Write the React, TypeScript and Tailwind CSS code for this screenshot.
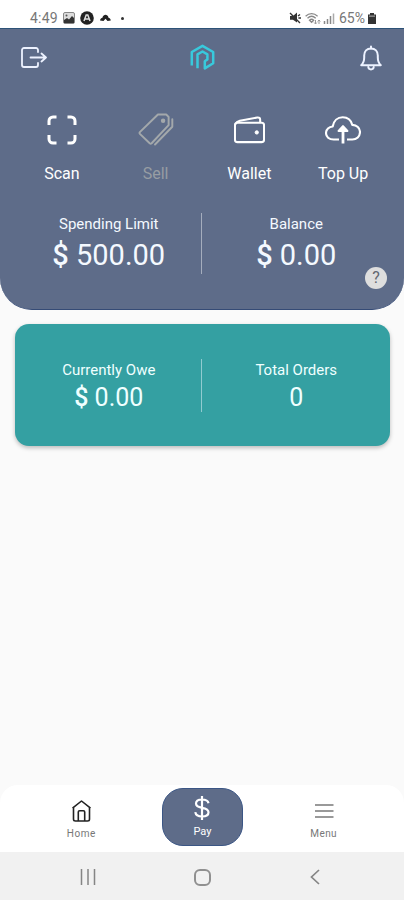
import type { ReactNode } from 'react';

const StatusBar = () => {
  return (
    <div className="flex h-7 items-start justify-between bg-white pt-[9px] pr-[28px] pl-[30px] text-[14px] leading-[18px] text-[#777]">
      <div className="flex items-center">
        <span className="w-[28px] tracking-[0.2px]">4:49</span>
        <svg className="ml-[5px] h-3 w-3" viewBox="0 0 12 12">
          <rect x="0.5" y="0.5" width="11" height="11" rx="1.5" fill="#ddd" stroke="#888" />
          <path d="M1 10V8l3-2 2 1.5L9 4l2 2v5H1z" fill="#333" />
          <circle cx="3.5" cy="3.4" r="1" fill="#555" />
        </svg>
        <svg className="ml-[5px] h-[14px] w-[14px]" viewBox="0 0 14 14">
          <circle cx="7" cy="7" r="6.8" fill="#222" />
          <path d="M4 10 6.2 4h1.6L10 10M5.3 8h3.4" fill="none" stroke="#ddd" strokeWidth="1.5" />
        </svg>
        <svg className="ml-[6px] h-2 w-[11px]" viewBox="0 0 11 8">
          <path d="M0 6.5C.3 4.5 1.5 4 2.4 3.8 3 1.5 4.3.8 5.5.8s2.7.8 3 3c1 .2 2 .9 2.3 2.7L7.5 7 5.5 4.8 3.5 7z" fill="#222" />
        </svg>
        <span className="ml-[10px] h-[3px] w-[3px] rounded-full bg-[#333]" />
      </div>
      <div className="flex items-center">
        <svg className="h-3 w-3" viewBox="0 0 12 12">
          <path d="M1 4h3l4-3.5v10L4 7.8H1z" fill="#333" />
          <path d="m1 1 10 10M9 4l2-1.5M9.4 6H12" stroke="#333" strokeWidth="1.4" />
        </svg>
        <svg className="ml-1 h-[13px] w-4" viewBox="0 0 16 13">
          <path d="M.6 4.2C4.2.8 9 .8 12.6 4.2M2.5 6.2c2.5-2.4 5.7-2.4 8.2 0M4.5 8.2c1.3-1.2 2.9-1.2 4.2 0L6.6 10.3z" fill="none" stroke="#888" strokeWidth="1.3" />
          <path d="M10.5 8v4m-1.4-1.5L10.5 12l1.4-1.5M14 12V8m-1.4 1.4L14 8l1.4 1.4" fill="none" stroke="#999" />
        </svg>
        <svg className="ml-[2px] h-[11px] w-3" viewBox="0 0 12 11">
          <path d="M1.5 8v3M4.5 6v5M7.5 3v8" stroke="#888" strokeWidth="1.5" />
          <path d="M10.5.5V11" stroke="#aaa" strokeWidth="1.5" />
        </svg>
        <span className="ml-1 w-[28px]">65%</span>
        <svg className="ml-px h-[11px] w-2" viewBox="0 0 8 11">
          <path d="M0 1.5h2V0h4v1.5h2V11H0z" fill="#333" />
          <path d="M1 2.5h6v1.3H1z" fill="#999" />
        </svg>
      </div>
    </div>
  );
};

const LogoutIcon = () => (
  <svg className="h-[21px] w-[26px]" viewBox="0 0 26 21" fill="none" stroke="#edf2ff" strokeWidth="1.8" strokeLinecap="round" strokeLinejoin="round">
    <path d="M17 5V3a2 2 0 0 0-2-2H3a2 2 0 0 0-2 2v15a2 2 0 0 0 2 2h12a2 2 0 0 0 2-2v-2" />
    <path d="M9.5 10.5H25M20.5 6.5l4.5 4-4.5 4" />
  </svg>
);

const Logo = () => (
  <svg className="h-[27px] w-[25px]" viewBox="0 0 25 27" fill="none" stroke="#38c9dc" strokeWidth="2.5" strokeLinejoin="round">
    <path d="M1.8 21.5V8l10.7-6.2L23.2 8v11.2l-8.4 5.2v-7.2l2.6-1.8v-5l-4.9-2.9-5 2.9v13.8" />
  </svg>
);

const BellIcon = () => (
  <svg className="h-[26px] w-[22px]" viewBox="0 0 22 26" fill="none" stroke="#edf2ff" strokeWidth="2" strokeLinejoin="round" strokeLinecap="round">
    <path d="M1.2 20.2c2.3-2.1 3-4 3-7.8v-2c0-4.2 2.6-7 6.8-7s6.8 2.8 6.8 7v2c0 3.8.7 5.7 3 7.8z" />
    <path d="M11 1.4v2M8.3 22c.3 3.2 5.1 3.2 5.4 0" />
  </svg>
);

const ScanIcon = () => (
  <svg className="h-[30px] w-[30px]" viewBox="0 0 30 30" fill="none" stroke="#fff" strokeWidth="3">
    <path d="M2 10V6a4 4 0 0 1 4-4h3.5M20.5 2H24a4 4 0 0 1 4 4v4M28 20v4a4 4 0 0 1-4 4h-3.5M9.5 28H6a4 4 0 0 1-4-4v-4" />
  </svg>
);

const TagIcon = () => (
  <svg className="h-[33px] w-9" viewBox="0 0 36 34" fill="none" stroke="#a3a8ab" strokeWidth="2" strokeLinejoin="round" strokeLinecap="round">
    <path d="M20 1.5h8.5L31 4v8.5L13.5 31.2Q12.5 32 11.5 31.2L1.4 21.5q-.8-1 .2-2z" />
    <path d="M34.8 6.5v7.7L17 32.5" />
    <circle cx="25.3" cy="8" r="1.3" fill="#a3a8ab" />
  </svg>
);

const WalletIcon = () => (
  <svg className="h-7 w-[31px]" viewBox="0 0 32 28" fill="none" stroke="#fff" strokeWidth="2.1" strokeLinejoin="round">
    <rect x="1" y="6.5" width="30" height="20" rx="2.5" />
    <path d="M1.5 8C2.5 5.5 4 5 6 4.4L24 1.1c2-.3 3 .6 3 2.3v3" />
    <circle cx="23.5" cy="16.5" r="1.7" fill="#fff" strokeWidth="1" />
  </svg>
);

const CloudIcon = () => (
  <svg className="h-7 w-9" viewBox="0 0 36 28" fill="none" stroke="#fff" strokeWidth="2.1" strokeLinejoin="round">
    <path d="M14 23.5H8.7C4 23.5 1 20.8 1 17.1c0-3.6 3-6.3 6.7-6.6C8.6 5 12.5 1.2 17.7 1.2c4.8 0 8.4 2.8 9.6 7.7 4.5.2 7.7 3.2 7.7 7.2 0 4.3-3.4 7.4-7.7 7.4H22" />
    <path d="M18 27.5V14" strokeWidth="2.8" />
    <path d="M13.6 15 18 10.2l4.4 4.8z" fill="#fff" />
  </svg>
);

const actions = [
  { label: 'Scan', icon: <ScanIcon />, color: 'text-white' },
  { label: 'Sell', icon: <TagIcon />, color: 'text-[#979da3]' },
  { label: 'Wallet', icon: <WalletIcon />, color: 'text-white' },
  { label: 'Top Up', icon: <CloudIcon />, color: 'text-white' }
];

const Stat = ({ label, children }: { label: string; children: ReactNode }) => (
  <div className="flex flex-1 flex-col items-center">
    <span className="text-[15px] leading-5">{label}</span>
    {children}
  </div>
);

const AccountPanel = () => {
  return (
    <section className="h-[282px] rounded-b-[32px] border-t border-b border-t-[#2d5378] border-b-[#354b76] bg-[#5e6c89] text-[#f4f9ff]">
      <header className="grid h-[57px] grid-cols-3 items-center pr-[22px] pl-[21px]">
        <button aria-label="Log out">
          <LogoutIcon />
        </button>
        <div className="flex justify-center pl-[2px]">
          <Logo />
        </div>
        <button aria-label="Notifications" className="justify-self-end">
          <BellIcon />
        </button>
      </header>

      <nav className="flex h-[128px] pt-[26px] pr-[14px] pl-[15px]">
        {actions.map((action) => (
          <button key={action.label} className="flex flex-1 flex-col items-center">
            <span className="flex h-[35px] items-center">{action.icon}</span>
            <span className={`mt-[17px] text-base leading-5 ${action.color}`}>{action.label}</span>
          </button>
        ))}
      </nav>

      <div className="flex h-[60px] pr-[14px] pl-[15px]">
        <Stat label="Spending Limit">
          <span className="mt-px text-[29px] leading-10">
            <span className="font-medium">$</span> 500.00
          </span>
        </Stat>
        <div className="-mt-px mr-px -ml-[2px] w-px bg-[#a5adbd]" />
        <Stat label="Balance">
          <span className="mt-px text-[29px] leading-10">
            <span className="font-medium">$</span> 0.00
          </span>
        </Stat>
      </div>
      <div className="-mt-[7px] flex justify-end pr-[17px]">
        <button className="flex h-[22px] w-[22px] items-center justify-center rounded-full bg-[#dedede] text-[16px] leading-none text-[#626771]">
          ?
        </button>
      </div>
    </section>
  );
};

const OrdersCard = () => {
  return (
    <section className="mt-[14px] mr-[14px] ml-[15px] flex h-[122px] items-center rounded-[14px] bg-[#34a0a2] pt-px text-[#efffff] shadow-[0_2px_4px_rgba(0,0,0,0.25)]">
      <Stat label="Currently Owe">
        <span className="mt-px -mb-[3px] text-[25px] leading-[34px]">
          <span className="font-medium">$</span> 0.00
        </span>
      </Stat>
      <div className="mr-px -ml-[2px] h-[53px] w-px bg-[#91cbd0]" />
      <Stat label="Total Orders">
        <span className="mt-px -mb-[3px] text-[25px] leading-[34px]">0</span>
      </Stat>
    </section>
  );
};

const TabBar = () => {
  return (
    <nav className="mt-auto grid h-[67px] grid-cols-3 rounded-t-[18px] bg-white pt-[3px] text-[10px] text-[#777]">
      <button className="ml-[28px] flex flex-col items-center pt-3">
        <svg className="h-[22px] w-[21px]" viewBox="0 0 20 22" fill="none" stroke="#222" strokeWidth="1.6" strokeLinejoin="round">
          <path d="M1 8.2 10 1l9 7.2M2 7.5v11.8Q2 21 4 21h12q2 0 2-1.7V7.5" />
          <path d="M6.8 21v-9q0-1.3 1.3-1.3h3.8q1.3 0 1.3 1.3v9" />
        </svg>
        <span className="mt-[6px] leading-3 tracking-[0.6px]">Home</span>
      </button>
      <button className="ml-px flex h-[58px] w-[81px] flex-col items-center justify-self-center rounded-[21px] border border-[#3b5685] bg-[#5e6c89] pt-[7px] text-white">
        <svg className="h-6 w-4" viewBox="0 0 16 24" fill="none" stroke="#fff" strokeWidth="2.2">
          <path d="M8 0v24M14.5 7.2C14 4.5 11.5 3.5 8 3.5c-3.7 0-6 1.6-6 4.1 0 2.4 1.7 3.5 6 4.2 4.6.8 6.5 2 6.5 4.5s-2.4 4.2-6.3 4.2c-4 0-6.5-1.5-6.9-4.4" />
        </svg>
        <span className="mt-[6px] text-[11px] leading-3">Pay</span>
      </button>
      <button className="mr-[26px] flex flex-col items-center pt-3">
        <svg className="h-[22px] w-5" viewBox="0 0 20 22" stroke="#999" strokeWidth="2">
          <path d="M1 5h18.5M1 11h18.5M1 17h18.5" />
        </svg>
        <span className="mt-[6px] leading-3 tracking-[0.4px]">Menu</span>
      </button>
    </nav>
  );
};

const SystemBar = () => {
  return (
    <div className="flex h-12 items-center justify-between bg-[#f1f1f1] pt-[2px] pr-[84px] pl-[80px]">
      <svg className="h-4 w-4" viewBox="0 0 16 16" stroke="#858585" strokeWidth="1.5">
        <path d="M1.5 0v16M8 0v16M14.5 0v16" />
      </svg>
      <span className="-ml-[2px] h-[17px] w-[17px] rounded-[6px] border-2 border-[#909090]" />
      <svg className="h-4 w-[10px]" viewBox="0 0 10 16" fill="none" stroke="#858585" strokeWidth="1.7">
        <path d="M9 1 1.5 8 9 15" />
      </svg>
    </div>
  );
};

const App = () => {
  return (
    <main className="flex h-[900px] w-[404px] flex-col overflow-hidden bg-[#fafafa] font-['Roboto',sans-serif]">
      <StatusBar />
      <AccountPanel />
      <OrdersCard />
      <TabBar />
      <SystemBar />
    </main>
  );
};

export default App;
